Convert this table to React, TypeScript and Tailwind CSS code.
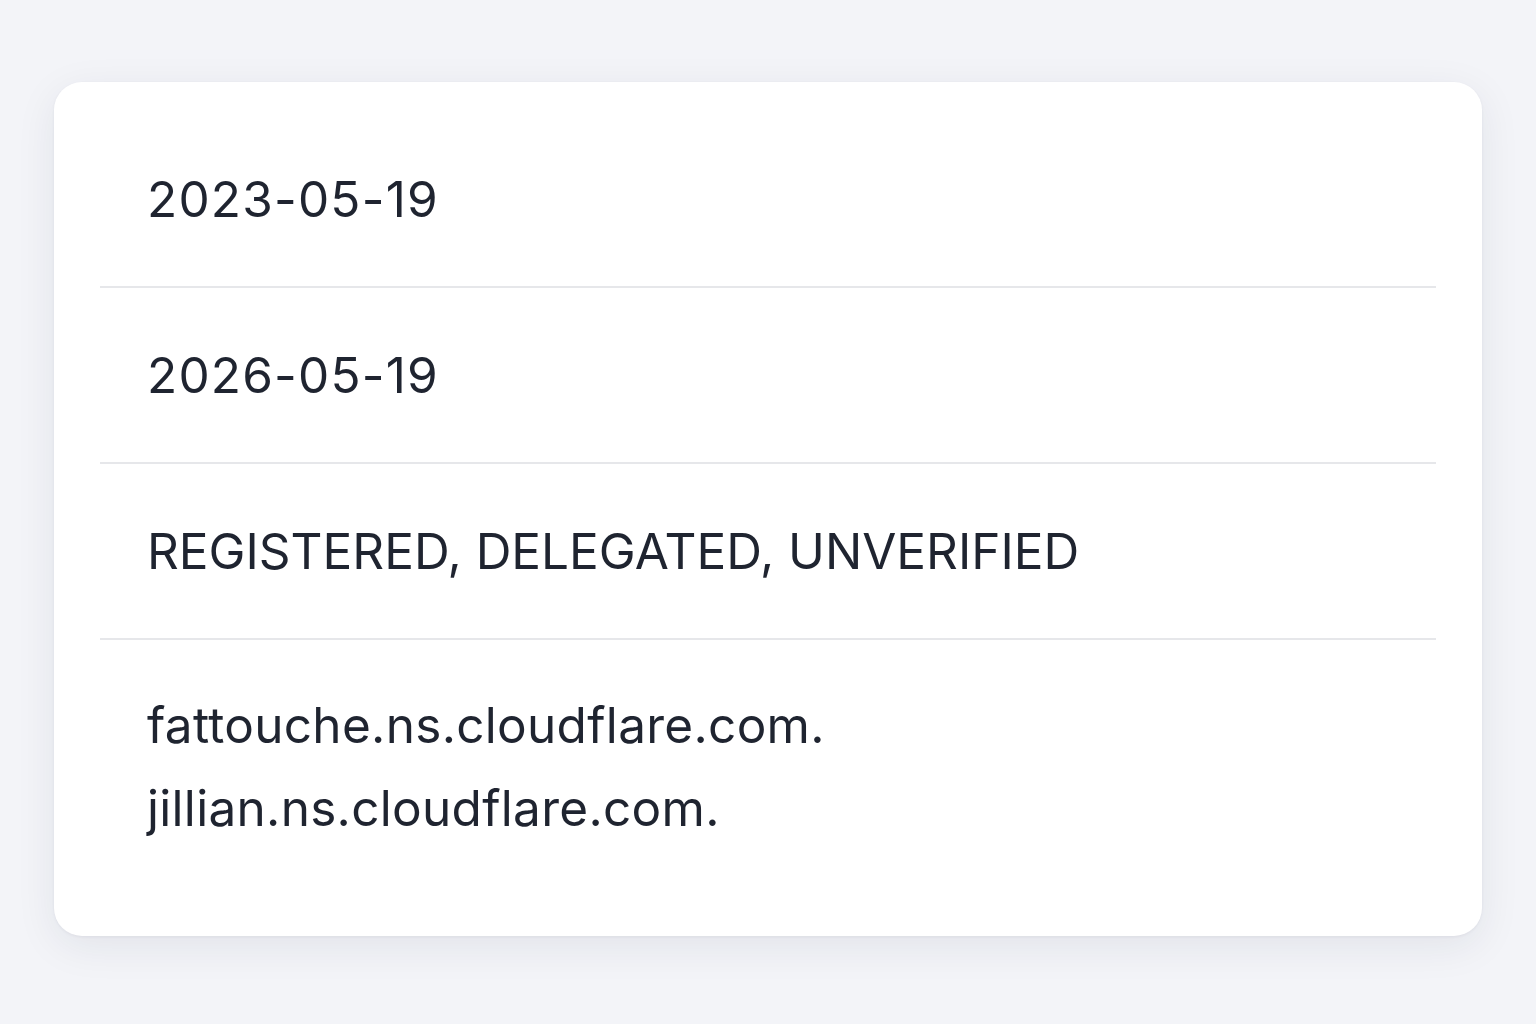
export default function App() {
  const rows = [
    { lines: ["2023-05-19"], track: "tracking-[1.2px]" },
    { lines: ["2026-05-19"], track: "tracking-[1.2px]" },
    { lines: ["REGISTERED, DELEGATED, UNVERIFIED"], track: "" },
    {
      lines: ["fattouche.ns.cloudflare.com.", "jillian.ns.cloudflare.com."],
      track: "tracking-[0.3px]",
    },
  ];

  return (
    <div
      className="min-h-screen w-full bg-[#f3f4f8] pt-[82px] px-[54px]"
      style={{ fontFamily: "Inter, 'Noto Sans', sans-serif" }}
    >
      <div className="h-[854px] rounded-[28px] bg-white px-[46px] pt-[30px] shadow-[0_10px_40px_rgba(30,40,70,0.08),0_1px_3px_rgba(30,40,70,0.06)]">
        {rows.map((row, i) => (
          <div
            key={i}
            className={
              i < rows.length - 1
                ? "flex h-[176px] flex-col justify-center border-b-2 border-[#e6e7ea] px-[47px]"
                : "flex flex-col px-[47px] pt-[44px]"
            }
          >
            {row.lines.map((t) => (
              <div
                key={t}
                className={`text-[49.5px] leading-[83px] text-[#1f2430] ${row.track}`}
              >
                {t}
              </div>
            ))}
          </div>
        ))}
      </div>
    </div>
  );
}
